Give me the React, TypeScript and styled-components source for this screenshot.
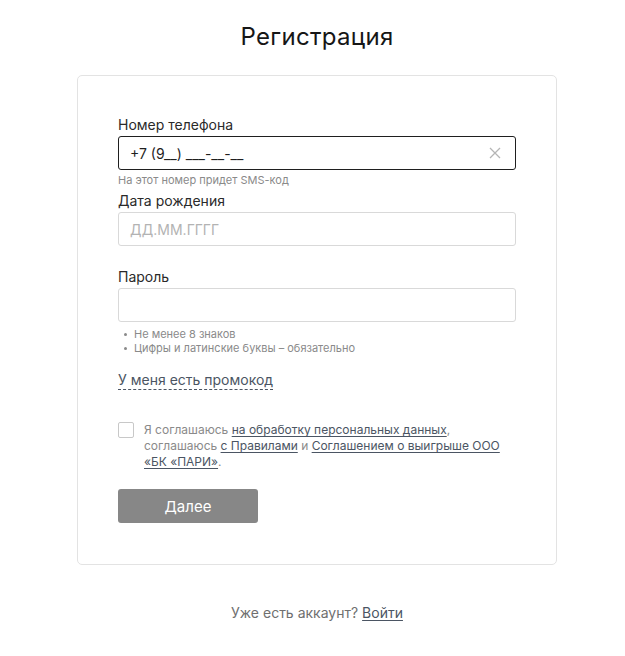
import React from "react";
import styled, { createGlobalStyle } from "styled-components";

const Global = createGlobalStyle`
  html, body { margin: 0; padding: 0; background: #fff; }
  body { font-family: Inter, "Noto Sans", sans-serif; color: #1f1f1f; }
  * { box-sizing: border-box; }
`;

const Page = styled.div`
  width: 625px;
  display: flex;
  flex-direction: column;
  align-items: center;
  padding: 22px 0 0 9px;
`;

const Title = styled.h1`
  margin: 0;
  font-size: 24px;
  font-weight: 400;
  line-height: 30px;
  letter-spacing: 0.3px;
  color: #161616;
`;

const Card = styled.div`
  margin-top: 23px;
  width: 480px;
  border: 1px solid #e3e3e3;
  border-radius: 5px;
  padding: 40px 40px 41px;
  display: flex;
  flex-direction: column;
`;

const Field = styled.div<{ $mt?: number }>`
  display: flex;
  flex-direction: column;
  margin-top: ${(p) => p.$mt ?? 0}px;
`;

const Label = styled.label`
  font-size: 14px;
  line-height: 18px;
  color: #2a2a2a;
  margin-bottom: 2px;
`;

const InputBox = styled.div<{ $focused?: boolean }>`
  flex: none;
  height: 34px;
  border: 1px solid ${(p) => (p.$focused ? "#1f1f1f" : "#d9d9d9")};
  border-radius: 3px;
  display: flex;
  align-items: center;
  padding: 0 14px 0 11px;
  font-size: 14px;
`;

const Value = styled.span`
  flex: 1;
  color: #1f1f1f;
  font-size: 14px;
`;

const Placeholder = styled.span`
  flex: 1;
  color: #b3b3b3;
  font-size: 14px;
`;

const Hint = styled.div`
  font-size: 11px;
  line-height: 14px;
  color: #8a8a8a;
  margin-top: 3px;
`;

const Rules = styled.ul`
  margin: 5px 0 0;
  padding: 0 0 0 6px;
  list-style: none;
`;

const Rule = styled.li`
  font-size: 11px;
  line-height: 14px;
  color: #8a8a8a;
  display: flex;
  align-items: center;
  &::before {
    content: "";
    width: 3px;
    height: 3px;
    background: #8a8a8a;
    border-radius: 50%;
    margin-right: 7px;
  }
`;

const Promo = styled.span`
  align-self: flex-start;
  margin-top: 16px;
  font-size: 14px;
  line-height: 18px;
  color: #4b5563;
  border-bottom: 1px dashed #4b5563;
`;

const Agree = styled.div`
  margin-top: 32px;
  display: flex;
  align-items: flex-start;
  gap: 10px;
`;

const Box = styled.span`
  flex: none;
  width: 16px;
  height: 16px;
  border: 1px solid #c8c8c8;
  border-radius: 2px;
`;

const AgreeText = styled.p`
  margin: 0;
  font-size: 12px;
  line-height: 16px;
  color: #8a8a8a;
  width: 370px;
`;

const Link = styled.a`
  color: #4b5563;
  text-decoration: underline;
  text-underline-offset: 2px;
`;

const Button = styled.button`
  flex: none;
  margin-top: 19px;
  width: 140px;
  height: 34px;
  border: none;
  border-radius: 3px;
  background: #878787;
  color: #fff;
  font-family: inherit;
  font-size: 15px;
  align-self: flex-start;
`;

const Footer = styled.div`
  margin-top: 39px;
  font-size: 14px;
  line-height: 18px;
  color: #6f6f6f;
`;

const Clear = () => (
  <svg width="12" height="12" viewBox="0 0 12 12">
    <path d="M1 1 L11 11 M11 1 L1 11" stroke="#b5b5b5" strokeWidth="1.3" />
  </svg>
);

export default function App() {
  return (
    <>
      <Global />
      <Page>
        <Title>Регистрация</Title>
        <Card>
          <Field>
            <Label>Номер телефона</Label>
            <InputBox $focused>
              <Value>+7 (9__) ___-__-__</Value>
              <Clear />
            </InputBox>
            <Hint>На этот номер придет SMS-код</Hint>
          </Field>
          <Field $mt={5}>
            <Label>Дата рождения</Label>
            <InputBox>
              <Placeholder>ДД.ММ.ГГГГ</Placeholder>
            </InputBox>
          </Field>
          <Field $mt={22}>
            <Label>Пароль</Label>
            <InputBox />
            <Rules>
              <Rule>Не менее 8 знаков</Rule>
              <Rule>Цифры и латинские буквы – обязательно</Rule>
            </Rules>
          </Field>
          <Promo>У меня есть промокод</Promo>
          <Agree>
            <Box />
            <AgreeText>
              Я соглашаюсь <Link>на обработку персональных данных</Link>,
              <br />
              соглашаюсь <Link>с Правилами</Link> и{" "}
              <Link>Соглашением о выигрыше ООО</Link>
              <br />
              <Link>«БК «ПАРИ»</Link>.
            </AgreeText>
          </Agree>
          <Button>Далее</Button>
        </Card>
        <Footer>
          Уже есть аккаунт? <Link>Войти</Link>
        </Footer>
      </Page>
    </>
  );
}
